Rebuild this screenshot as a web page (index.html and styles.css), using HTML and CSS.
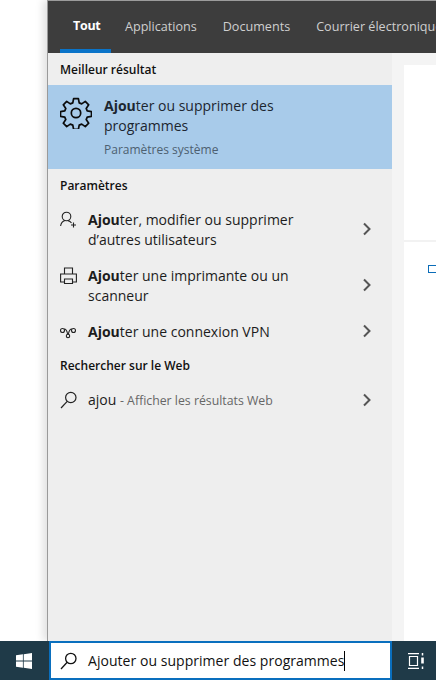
FILE: index.html
```html
<!DOCTYPE html>
<html lang="fr">
<head>
<meta charset="utf-8">
<title>Recherche</title>
<link rel="stylesheet" href="styles.css">
</head>
<body>
<div class="screen">
  <div class="stage">
    <div class="window">
      <nav class="tabs">
        <span class="tab active">Tout</span>
        <span class="tab">Applications</span>
        <span class="tab">Documents</span>
        <span class="tab">Courrier électronique</span>
      </nav>
      <div class="panes">
        <section class="results">
          <h2 class="heading first">Meilleur résultat</h2>
          <div class="best">
            <svg class="gear" viewBox="0 0 32 32" width="32" height="32" fill="none" stroke="#0b0b0b" stroke-width="1.7" stroke-linejoin="round">
              <circle cx="16" cy="16" r="4.7"/>
              <path d="M13.6 1.6h4.8l.8 4.3 2.5 1 3.6-2.5 3.4 3.4-2.5 3.6 1 2.5 4.3.8v4.6l-4.3.8-1 2.5 2.5 3.6-3.4 3.4-3.6-2.5-2.5 1-.8 4.3h-4.8l-.8-4.3-2.5-1-3.6 2.5-3.4-3.4 2.5-3.6-1-2.5-4.3-.8v-4.6l4.3-.8 1-2.5-2.5-3.6 3.4-3.4 3.6 2.5 2.5-1z"/>
            </svg>
            <div class="best-text">
              <div class="title"><b>Ajou</b>ter ou supprimer des programmes</div>
              <div class="sub">Paramètres système</div>
            </div>
          </div>
          <h2 class="heading second">Paramètres</h2>
          <div class="row two">
            <svg class="icon" viewBox="0 0 18 18" width="18" height="18" fill="none" stroke="#222" stroke-width="1.1">
              <circle cx="6.500" cy="5.500" r="4.300"/>
              <path d="M.6 15c.4-2.700 2.200-4.700 4.400-5.400M8 9.600c1.500.4 2.700 1.300 3.500 2.400M13.500 11.500v5M11 14h5"/>
            </svg>
            <div class="label"><b>Ajou</b>ter, modifier ou supprimer d’autres utilisateurs</div>
            <svg class="chev" viewBox="0 0 10 14" width="10" height="14" fill="none" stroke="#555" stroke-width="2"><path d="M2 1.500 7.500 7 2 12.500"/></svg>
          </div>
          <div class="row two">
            <svg class="icon" viewBox="0 0 18 18" width="18" height="18" fill="none" stroke="#222" stroke-width="1.100">
              <path d="M4.500 7V1h8v6M4.500 15H.6V7h15.800v8h-3.900M4.500 12h8v4.500h-8z"/>
            </svg>
            <div class="label"><b>Ajou</b>ter une imprimante ou un scanneur</div>
            <svg class="chev" viewBox="0 0 10 14" width="10" height="14" fill="none" stroke="#555" stroke-width="2"><path d="M2 1.500 7.500 7 2 12.500"/></svg>
          </div>
          <div class="row one">
            <svg class="icon" viewBox="0 0 18 18" width="18" height="18" fill="none" stroke="#222" stroke-width="1.100">
              <circle cx="2.500" cy="7.500" r="2"/>
              <circle cx="13.500" cy="7.500" r="2"/>
              <circle cx="8" cy="13" r="1.700"/>
              <path d="M4 6c2.200 0 3.200 2.200 3.600 5.300M12 6c-2.200 0-3.200 2.200-3.600 5.300"/>
            </svg>
            <div class="label"><b>Ajou</b>ter une connexion VPN</div>
            <svg class="chev" viewBox="0 0 10 14" width="10" height="14" fill="none" stroke="#555" stroke-width="2"><path d="M2 1.500 7.500 7 2 12.500"/></svg>
          </div>
          <h2 class="heading third">Rechercher sur le Web</h2>
          <div class="row web">
            <svg class="icon" viewBox="0 0 18 18" width="18" height="18" fill="none" stroke="#222" stroke-width="1.200">
              <circle cx="10.800" cy="6.500" r="5.200"/>
              <path d="M7.200 10.300 1 17"/>
            </svg>
            <div class="label">ajou <span class="hint">- Afficher les résultats Web</span></div>
            <svg class="chev" viewBox="0 0 10 14" width="10" height="14" fill="none" stroke="#555" stroke-width="2"><path d="M2 1.500 7.500 7 2 12.500"/></svg>
          </div>
        </section>
        <aside class="preview">
          <div class="card">
            <div class="card-top"></div>
            <div class="card-body"><span class="mark"></span></div>
          </div>
        </aside>
      </div>
    </div>
  </div>
  <footer class="taskbar">
    <div class="start">
      <svg viewBox="0 0 16 16" width="16" height="16" fill="#fff"><path d="M0 2.300 6.900 1.300V7.600H0zM7.700 1.200 16 0V7.600H7.700zM0 8.400H6.900V14.700L0 13.700zM7.700 8.400H16V16L7.700 14.800z"/></svg>
    </div>
    <div class="searchbox">
      <svg viewBox="0 0 18 18" width="18" height="18" fill="none" stroke="#111" stroke-width="1.300">
        <circle cx="10.800" cy="6.500" r="5.200"/>
        <path d="M7.200 10.300 1 17"/>
      </svg>
      <span class="query">Ajouter ou supprimer des programmes</span><span class="caret"></span>
    </div>
    <div class="taskview">
      <svg viewBox="0 0 17 16" width="17" height="16" fill="none" stroke="#fff" stroke-width="1.200">
        <path d="M0 .6h11M0 15.400h11M1.500 3.500h8v9h-8z"/>
        <path d="M14.500 0v2.500M14.500 13.500V16" stroke-width="1.500"/>
        <path d="M13.200 4.500h2.600v6h-2.600z" fill="#fff" stroke="none"/>
      </svg>
    </div>
  </footer>
</div>
</body>
</html>
```
FILE: styles.css
```css
* { box-sizing: border-box; }
html, body { margin: 0; padding: 0; }
body {
  width: 436px;
  height: 680px;
  overflow: hidden;
  background: #fff;
  font-family: "Open Sans", "Noto Sans", "Liberation Sans", sans-serif;
}
.screen {
  display: flex;
  flex-direction: column;
  width: 436px;
  height: 680px;
}
.stage {
  flex: 0 0 641px;
  padding-left: 47px;
  background: #fff;
  overflow: hidden;
}
.window {
  display: flex;
  flex-direction: column;
  width: 389px;
  height: 641px;
  border-left: 1px solid #9a9a9a;
  border-top: 1px solid #9c9c9c;
  box-shadow: -4px 0 8px rgba(0, 0, 0, .12);
}
.tabs {
  display: flex;
  flex: 0 0 52px;
  padding-left: 12px;
  background: #3d3d3d;
  white-space: nowrap;
  overflow: hidden;
}
.tab {
  padding: 17px 13px 0;
  font-size: 12.600px;
  line-height: 18px;
  color: #cfcfcf;
}
.tab.active {
  width: 51px;
  margin-right: 1px;
  padding-top: 16px;
  border-bottom: 4px solid #0a74c9;
  color: #fff;
  font-size: 12.500px;
  font-weight: 700;
  letter-spacing: -.3px;
}
.panes {
  display: flex;
  flex: 1;
  min-height: 0;
}
.results {
  flex: 0 0 344px;
  background: #eeeeee;
  color: #111;
}
.heading {
  margin: 0;
  padding-left: 12px;
  font-size: 12px;
  line-height: 16px;
  font-weight: 600;
  color: #111;
}
.heading.first { padding-top: 9px; padding-bottom: 7px; }
.heading.second { padding-top: 9px; padding-bottom: 8px; }
.heading.third { padding-top: 8px; padding-bottom: 9px; }
.best {
  display: flex;
  height: 84px;
  padding: 11px 12px 0;
  gap: 12px;
  background: #a8cbea;
}
.gear { flex: none; margin-top: 1px; }
.best-text { width: 210px; }
.title {
  font-size: 14px;
  line-height: 20px;
  color: #1c2630;
}
.title b, .label b { font-weight: 700; }
.sub {
  margin-top: 5px;
  font-size: 12px;
  line-height: 18px;
  color: #4d6070;
}
.row {
  display: flex;
  padding-left: 12px;
  padding-right: 20px;
  font-size: 14px;
  line-height: 20px;
  color: #1c1c1c;
}
.row.two { height: 56px; padding-top: 8px; }
.row.two .chev { margin-top: 12px; }
.row.one { height: 36px; padding-top: 8px; }
.row.one .chev { margin-top: 2px; }
.row.web { height: 36px; padding-top: 7px; }
.row.web .chev { margin-top: 3px; }
.icon { flex: none; margin-right: 10px; margin-top: 1px; }
.label { flex: 1; padding-right: 30px; }
.hint { font-size: 12.300px; color: #666; }
.chev { flex: none; }
.preview {
  flex: 1;
  padding: 12px 0 0 12px;
  background: #f4f4f4;
}
.card {
  display: flex;
  flex-direction: column;
  height: 100%;
  background: #fff;
}
.card-top {
  flex: 0 0 177px;
  border-bottom: 2px solid #f2f2f2;
}
.card-body { padding: 23px 0 0 24px; }
.mark {
  display: block;
  width: 8px;
  height: 8px;
  border: 1px solid #0a6cb8;
  border-right: 0;
}
.taskbar {
  display: flex;
  flex: 0 0 39px;
  background: #1f3a48;
}
.start {
  display: flex;
  flex: 0 0 49px;
  align-items: center;
  justify-content: center;
  padding-right: 2px;
}
.searchbox {
  display: flex;
  flex: 0 0 343px;
  align-items: center;
  padding-left: 9px;
  background: #fff;
  border: 2px solid #0a6fbe;
}
.query {
  margin-left: 10px;
  font-size: 14px;
  letter-spacing: .04px;
  color: #111;
  white-space: nowrap;
}
.caret {
  display: inline-block;
  width: 1px;
  height: 20px;
  background: #000;
}
.taskview {
  display: flex;
  flex: 1;
  align-items: center;
  justify-content: center;
  padding-left: 4px;
}
```
